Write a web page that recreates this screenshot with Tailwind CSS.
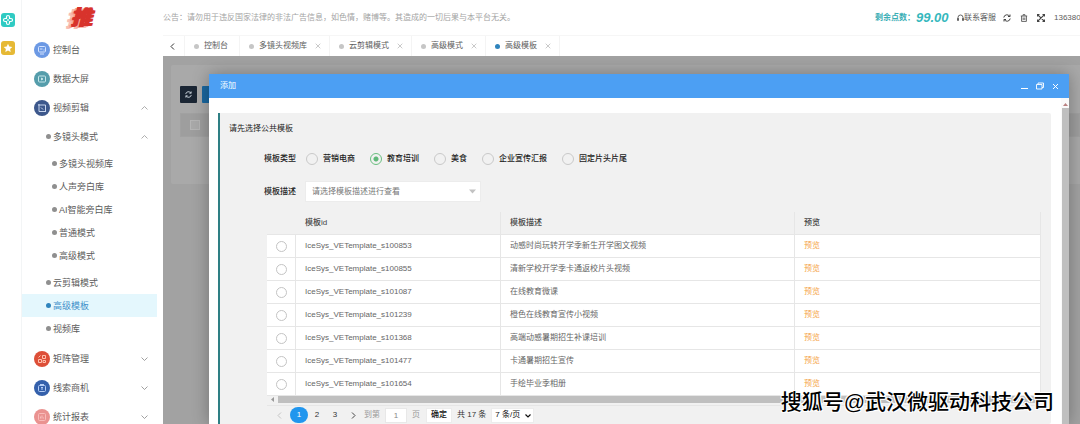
<!DOCTYPE html>
<html lang="zh-CN">
<head>
    <meta charset="UTF-8">
    <meta name="viewport" content="width=device-width, initial-scale=1.0">
    <title>高级模板</title>
    <script src="https://cdn.jsdelivr.net/npm/@tailwindcss/browser@4"></script>
</head>
<body class="flex h-screen overflow-hidden bg-white font-['Liberation_Sans','Noto_Sans_CJK_SC',sans-serif] text-[8px] leading-3 text-[#5c5c5c]">

    <!-- Shortcut strip -->
    <aside class="flex w-[22px] shrink-0 flex-col gap-[14px] border-r border-[#f3f5f6] pt-[13px] pl-px">
        <a href="#" aria-label="应用" class="block size-[14px] rounded-[3px] bg-[#2fcbc3]">
            <svg viewBox="0 0 14 14" fill="none" stroke="#fff" stroke-width="1.2" stroke-linejoin="round"><path d="M5.500 5.500V4a1.500 1.500 0 0 1 3 0v1.500H10a1.500 1.500 0 0 1 0 3H8.500V10a1.500 1.500 0 0 1-3 0V8.500H4a1.500 1.500 0 0 1 0-3zM7 6v2"/></svg>
        </a>
        <a href="#" aria-label="收藏" class="block size-[14px] rounded-[3px] bg-[#e6b935]">
            <svg viewBox="0 0 14 14" fill="#fff"><path d="m7 2.800 1.300 2.700 3 .4-2.200 2.100.6 3L7 9.600 4.300 11l.6-3-2.200-2.100 3-.4z"/></svg>
        </a>
    </aside>

    <!-- Sidebar -->
    <nav class="flex w-[141px] shrink-0 flex-col pr-[6px] text-[9px]">
        <div class="flex h-[35px] shrink-0 items-center justify-center pr-4">
            <span class="text-[21px] leading-none font-black text-[#d8332c] italic [text-shadow:1px_0_0_#d8332c,-1px_0_0_#d8332c,-3px_1px_0_#f7a598,-5px_2px_0_#f9bdb2,-6px_2px_0_#f9bdb2]">推</span>
        </div>

        <a href="#" class="flex h-[29px] shrink-0 items-center gap-[3px] pl-3">
            <svg class="size-4" viewBox="0 0 16 16" fill="none" stroke="#d5e4ff"><circle cx="8" cy="8" r="8" fill="#6c99e4" stroke="none"/><rect x="4.500" y="4.500" width="7" height="5.500" rx="1"/><path d="M6 7h2.500M6 12h4M10 7.500v1"/></svg>
            控制台
        </a>
        <a href="#" class="flex h-[29px] shrink-0 items-center gap-[3px] pl-3">
            <svg class="size-4" viewBox="0 0 16 16" fill="none" stroke="#c6e6ea"><circle cx="8" cy="8" r="8" fill="#559dab" stroke="none"/><rect x="4.500" y="5" width="7" height="6" rx="1"/><path d="M7.500 7v2L9 8z"/></svg>
            数据大屏
        </a>
        <a href="#" class="flex h-[29px] shrink-0 items-center gap-[3px] pl-3">
            <svg class="size-4" viewBox="0 0 16 16" fill="none" stroke="#c9d6ee"><circle cx="8" cy="8" r="8" fill="#3d588c" stroke="none"/><path d="M4 5h7.500v6.500M5 4v7.500h7M7 7.500l2 2"/></svg>
            视频剪辑
            <svg class="mr-[9px] ml-auto h-1 w-[7px]" viewBox="0 0 7 4" fill="none" stroke="#999" stroke-width=".8"><path d="m.5 3.500 3-3 3 3"/></svg>
        </a>
        <a href="#" class="flex h-[29px] shrink-0 items-center gap-[2px] pl-6">
            <i class="size-[5px] rounded-full bg-[#8f8f8f]"></i>多镜头模式
            <svg class="mr-[9px] ml-auto h-1 w-[7px]" viewBox="0 0 7 4" fill="none" stroke="#999" stroke-width=".8"><path d="m.5 3.500 3-3 3 3"/></svg>
        </a>

        <div class="flex shrink-0 flex-col pt-px pb-1 pl-[30px]">
            <a href="#" class="flex h-[23px] items-center gap-[2px]"><i class="size-[5px] rounded-full bg-[#8f8f8f]"></i>多镜头视频库</a>
            <a href="#" class="flex h-[23px] items-center gap-[2px]"><i class="size-[5px] rounded-full bg-[#8f8f8f]"></i>人声旁白库</a>
            <a href="#" class="flex h-[23px] items-center gap-[2px]"><i class="size-[5px] rounded-full bg-[#8f8f8f]"></i>AI智能旁白库</a>
            <a href="#" class="flex h-[23px] items-center gap-[2px]"><i class="size-[5px] rounded-full bg-[#8f8f8f]"></i>普通模式</a>
            <a href="#" class="flex h-[23px] items-center gap-[2px]"><i class="size-[5px] rounded-full bg-[#8f8f8f]"></i>高级模式</a>
        </div>

        <div class="flex shrink-0 flex-col pb-1">
            <a href="#" class="flex h-[23px] items-center gap-[2px] pl-6"><i class="size-[5px] rounded-full bg-[#8f8f8f]"></i>云剪辑模式</a>
            <a href="#" class="flex h-[23px] items-center gap-[2px] bg-[#e4f7fd] pl-6 text-[#3f8fc9]"><i class="size-[5px] rounded-full bg-[#2f84bd]"></i>高级模板</a>
            <a href="#" class="flex h-[23px] items-center gap-[2px] pl-6"><i class="size-[5px] rounded-full bg-[#8f8f8f]"></i>视频库</a>
        </div>

        <a href="#" class="flex h-[29px] shrink-0 items-center gap-[3px] pl-3">
            <svg class="size-4" viewBox="0 0 16 16" fill="none" stroke="#ffc0ac"><circle cx="8" cy="8" r="8" fill="#dd4f38" stroke="none"/><path d="M4.500 8.500h3v3h-3zM8.500 4.500h3v3h-3zM9 9.500h2.500v2H9zM4.500 6.500l2-2"/></svg>
            矩阵管理
            <svg class="mr-[9px] ml-auto h-1 w-[7px]" viewBox="0 0 7 4" fill="none" stroke="#888" stroke-width=".8"><path d="m.5.5 3 3 3-3"/></svg>
        </a>
        <a href="#" class="flex h-[29px] shrink-0 items-center gap-[3px] pl-3">
            <svg class="size-4" viewBox="0 0 16 16" fill="none" stroke="#b5cdf5"><circle cx="8" cy="8" r="8" fill="#3460ab" stroke="none"/><rect x="4.500" y="5.500" width="7" height="6" rx="1"/><path d="M6 4.500h4M7 7.500h2M8 7.500v2.500"/></svg>
            线索商机
            <svg class="mr-[9px] ml-auto h-1 w-[7px]" viewBox="0 0 7 4" fill="none" stroke="#888" stroke-width=".8"><path d="m.5.5 3 3 3-3"/></svg>
        </a>
        <a href="#" class="flex h-[29px] shrink-0 items-center gap-[3px] pl-3">
            <svg class="size-4" viewBox="0 0 16 16" fill="none" stroke="#f8bcba"><circle cx="8" cy="8" r="8" fill="#ea9290" stroke="none"/><rect x="4.500" y="4.500" width="7" height="7" rx="1"/><path d="M6.500 9.500v-2M8 9.500v-3M9.500 9.500v-1"/></svg>
            统计报表
            <svg class="mr-[9px] ml-auto h-1 w-[7px]" viewBox="0 0 7 4" fill="none" stroke="#888" stroke-width=".8"><path d="m.5.5 3 3 3-3"/></svg>
        </a>
    </nav>

    <div class="flex min-w-0 flex-1 flex-col">
        <!-- Top bar -->
        <header class="flex h-[35px] shrink-0 items-center justify-between whitespace-nowrap">
            <p class="text-[#a3a3a3]">公告：请勿用于违反国家法律的非法广告信息，如色情，赌博等。其造成的一切后果与本平台无关。</p>
            <div class="flex w-[205px] shrink-0 items-center">
                <span class="w-[41px] shrink-0 font-bold text-[#3aaeb5]">剩余点数：</span>
                <span class="w-[41px] shrink-0 text-[13px] leading-4 font-bold text-[#35b8bd] italic">99.00</span>
                <a href="#" class="flex w-[46px] shrink-0 items-center">
                    <svg class="h-2 w-[7px]" viewBox="0 0 7 8" fill="none" stroke="#555" stroke-width=".9"><path d="M1 5.500V3.500a2.500 2.500 0 0 1 5 0v2M.5 4.500h1v2h-1zM5.500 4.500h1v2h-1z"/></svg>联系客服
                </a>
                <button type="button" aria-label="刷新" class="mr-[9px] shrink-0">
                    <svg class="size-2" viewBox="0 0 8 8" fill="none" stroke="#444" stroke-width="1"><path d="M.8 3.500A3.200 3.200 0 0 1 6.800 2.500M7.200 4.500A3.200 3.200 0 0 1 1.200 5.500M7 .5v2H5M1 7.500v-2h2"/></svg>
                </button>
                <button type="button" aria-label="清除" class="mr-[9px] shrink-0">
                    <svg class="size-2" viewBox="0 0 8 8" fill="none" stroke="#555" stroke-width=".9"><path d="M.8 2h6.400M3 1.800V.7h2v1.100M1.600 2v5.400h4.800V2M3.200 3.500v2.500M4.800 3.500v2.500"/></svg>
                </button>
                <button type="button" aria-label="全屏" class="mr-[9px] shrink-0">
                    <svg class="size-2" viewBox="0 0 8 8" fill="none" stroke="#444" stroke-width="1.200"><path d="m.8.8 6.400 6.400M7.200.8.8 7.200M.5 2.500v-2h2M5.500.5h2v2M7.500 5.500v2h-2M2.500 7.500h-2v-2"/></svg>
                </button>
                <span>136380</span>
            </div>
        </header>

        <!-- Page tabs -->
        <div class="flex h-[21px] shrink-0 items-stretch border-t border-[#f6f6f6] whitespace-nowrap">
            <button type="button" aria-label="向左" class="flex w-[22px] items-center border-r border-[#f4f4f4] pl-[7px]">
                <svg class="h-[7px] w-[5px]" viewBox="0 0 5 7" fill="none" stroke="#333"><path d="m4 .5-3 3 3 3"/></svg>
            </button>
            <a href="#" class="flex items-center gap-[5px] border-r border-[#f4f4f4] pr-[11px] pl-[9px]"><i class="size-[5px] rounded-full bg-[#c6c6c6]"></i>控制台</a>
            <a href="#" class="flex items-center gap-[5px] border-r border-[#f4f4f4] pr-[8px] pl-[9px]"><i class="size-[5px] rounded-full bg-[#c6c6c6]"></i>多镜头视频库
                <svg class="ml-[3px] size-[6px]" viewBox="0 0 6 6" stroke="#bbb" stroke-width=".8"><path d="m.7.7 4.600 4.600M5.300.7.7 5.300"/></svg></a>
            <a href="#" class="flex items-center gap-[5px] border-r border-[#f4f4f4] pr-[8px] pl-[9px]"><i class="size-[5px] rounded-full bg-[#c6c6c6]"></i>云剪辑模式
                <svg class="ml-[3px] size-[6px]" viewBox="0 0 6 6" stroke="#bbb" stroke-width=".8"><path d="m.7.7 4.600 4.600M5.300.7.7 5.300"/></svg></a>
            <a href="#" class="flex items-center gap-[5px] border-r border-[#f4f4f4] pr-[8px] pl-[9px]"><i class="size-[5px] rounded-full bg-[#c6c6c6]"></i>高级模式
                <svg class="ml-[3px] size-[6px]" viewBox="0 0 6 6" stroke="#bbb" stroke-width=".8"><path d="m.7.7 4.600 4.600M5.300.7.7 5.300"/></svg></a>
            <a href="#" class="flex items-center gap-[5px] border-r border-[#f4f4f4] pr-[8px] pl-[9px]"><i class="size-[5px] rounded-full bg-[#2f84bd]"></i>高级模板
                <svg class="ml-[3px] size-[6px]" viewBox="0 0 6 6" stroke="#bbb" stroke-width=".8"><path d="m.7.7 4.600 4.600M5.300.7.7 5.300"/></svg></a>
        </div>

        <main class="relative flex-1 overflow-hidden bg-[#a2a2a2] pt-[9px] pl-2">
            <!-- Page behind the dialog -->
            <div class="h-[119px] rounded-l-[2px] bg-[#a9a9a9] pt-[21px] pl-[9px]">
                <div class="flex gap-[5px]">
                    <button type="button" aria-label="刷新列表" class="flex size-[17px] items-center justify-center rounded-[1px] bg-[#1b2634]">
                        <svg class="size-[7px]" viewBox="0 0 8 8" fill="none" stroke="#c5cdd5" stroke-width="1.100"><path d="M.8 3.500A3.200 3.200 0 0 1 6.800 2.500M7.200 4.500A3.200 3.200 0 0 1 1.200 5.500M7 .5v2H5M1 7.500v-2h2"/></svg>
                    </button>
                    <button type="button" aria-label="添加" class="h-[17px] w-10 rounded-[1px] bg-[#1a679f]"></button>
                </div>
                <div class="mt-[10px] flex h-6 items-center border border-[#a1a1a1] bg-[#9e9e9e] pl-[9px]">
                    <input type="checkbox" aria-label="全选" class="size-[10px] appearance-none border border-[#b5b5b5] bg-[#a9a9a9]">
                </div>
            </div>

            <!-- Dialog -->
            <section class="absolute top-[18px] right-[11px] bottom-0 left-[46px] flex flex-col bg-white shadow-[0_0_16px_rgba(0,0,0,0.3)]">
                <div class="flex h-6 shrink-0 items-center bg-[#4c9ff3] pr-[10px] pl-[11px] text-white">
                    <h2>添加</h2>
                    <div class="ml-auto flex items-center gap-2">
                        <button type="button" aria-label="最小化"><svg class="size-[7px]" viewBox="0 0 7 7" stroke="#fff"><path d="M0 5.500h7"/></svg></button>
                        <button type="button" aria-label="还原"><svg class="size-2" viewBox="0 0 8 8" fill="none" stroke="#fff" stroke-width=".9"><path d="M.5 2.500h5.500v4.500H.5zM2 2.500V1h5.500v4.500H6"/></svg></button>
                        <button type="button" aria-label="关闭"><svg class="size-[7px]" viewBox="0 0 7 7" stroke="#fff"><path d="m1 1 5 5M6 1 1 6"/></svg></button>
                    </div>
                </div>

                <div class="flex min-h-0 flex-1">
                    <div class="flex min-w-0 flex-1 flex-col pt-[15px] pr-[10px] pl-[9px]">
                        <form class="flex-1 rounded-r-[2px] border-l-2 border-[#2e7f84] bg-[#f1f1f1] pt-px pr-[10px] text-[#222]">
                            <h3 class="flex h-[30px] items-center pl-[9px]">请先选择公共模板</h3>

                            <div class="flex h-[30px] items-center gap-[9px] pl-[44px]">
                                <span class="w-8 font-medium">模板类型</span>
                                <div class="flex gap-[15px] pl-px font-medium">
                                    <label class="flex items-center gap-[5px]"><input type="radio" name="type" class="size-3 appearance-none rounded-full border border-[#c9c9c9]">营销电商</label>
                                    <label class="flex items-center gap-[5px]"><input type="radio" name="type" checked class="size-3 appearance-none rounded-full border border-[#c9c9c9] checked:border-[#6abf80] checked:bg-[radial-gradient(circle,#5fb878_0_2px,transparent_3px)]">教育培训</label>
                                    <label class="flex items-center gap-[5px]"><input type="radio" name="type" class="size-3 appearance-none rounded-full border border-[#c9c9c9]">美食</label>
                                    <label class="flex items-center gap-[5px]"><input type="radio" name="type" class="size-3 appearance-none rounded-full border border-[#c9c9c9]">企业宣传汇报</label>
                                    <label class="flex items-center gap-[5px]"><input type="radio" name="type" class="size-3 appearance-none rounded-full border border-[#c9c9c9]">固定片头片尾</label>
                                </div>
                            </div>

                            <div class="flex items-center gap-[9px] pt-[7px] pb-[9px] pl-[44px]">
                                <label for="desc" class="w-8 font-medium">模板描述</label>
                                <div class="relative">
                                    <select id="desc" class="block h-[21px] w-[176px] appearance-none border border-[#ececec] bg-white px-[6px] text-[#777]">
                                        <option>请选择模板描述进行查看</option>
                                    </select>
                                    <svg class="pointer-events-none absolute top-2 right-[5px] h-[5px] w-[7px]" viewBox="0 0 7 5" fill="#c2c2c2"><path d="M0 .5h7l-3.500 4z"/></svg>
                                </div>
                            </div>

                            <div class="ml-[47px] pt-px">
                                <table class="w-full table-fixed border-separate border-spacing-0 border-r border-[#e6e6e6] text-left text-[#666]">
                                    <thead>
                                        <tr class="h-[23px] text-[#444]">
                                            <th class="w-[29px] border-b border-[#e6e6e6]"></th>
                                            <th class="w-[205px] border-r border-b border-[#e6e6e6] pl-[9px] font-medium">模板id</th>
                                            <th class="w-[294px] border-r border-b border-[#e6e6e6] pl-[9px] font-medium">模板描述</th>
                                            <th class="border-b border-[#e6e6e6] pl-[9px] font-medium">预览</th>
                                        </tr>
                                    </thead>
                                    <tbody id="rows" class="bg-white"></tbody>
                                </table>
                                <div class="flex h-[7px] items-center gap-1 pl-1">
                                    <svg class="h-[5px] w-[3px]" viewBox="0 0 3 5" fill="#999"><path d="M3 0v5L0 2.500z"/></svg>
                                    <div class="mr-1 h-[7px] flex-1 bg-[#bfbfbf]"></div>
                                </div>

                                <!-- Pager -->
                                <div class="mt-[2px] flex items-center border-t border-[#e6e6e6] pt-px pl-[10px] text-[#333]">
                                    <button type="button" aria-label="上一页" class="mr-[8px]"><svg class="h-[7px] w-[5px]" viewBox="0 0 5 7" fill="none" stroke="#c4c4c4"><path d="m4 .5-3 3 3 3"/></svg></button>
                                    <button type="button" class="h-4 w-[18px] rounded-full bg-[#2196ee] text-white">1</button>
                                    <button type="button" class="w-[18px]">2</button>
                                    <button type="button" class="w-[18px]">3</button>
                                    <button type="button" aria-label="下一页" class="mr-[8px] ml-[7px]"><svg class="h-[7px] w-[5px]" viewBox="0 0 5 7" fill="none" stroke="#444"><path d="m1 .5 3 3-3 3"/></svg></button>
                                    <label for="page" class="text-[#999]">到第</label>
                                    <input id="page" type="text" value="1" class="mx-[5px] h-[15px] w-[22px] border border-[#e8e8e8] bg-white text-center text-[#888]">
                                    <span class="text-[#999]">页</span>
                                    <button type="button" class="mr-[5px] ml-[6px] h-[15px] w-[26px] border border-[#ececec] bg-white font-medium text-[#111]">确定</button>
                                    <span class="mr-[5px]">共 17 条</span>
                                    <div class="relative">
                                        <select aria-label="每页条数" class="block h-[15px] w-[43px] appearance-none border border-[#ececec] bg-white pl-[3px] text-[#111]">
                                            <option>7 条/页</option>
                                        </select>
                                        <svg class="pointer-events-none absolute top-[6px] right-[3px] h-1 w-[6px]" viewBox="0 0 6 4" fill="none" stroke="#111" stroke-width="1.200"><path d="m.5.5 2.500 2.500L5.500.5"/></svg>
                                    </div>
                                </div>
                            </div>
                        </form>
                    </div>

                    <!-- Dialog scrollbar -->
                    <div class="flex w-2 flex-col items-center bg-[#fafafa] pt-[5px]">
                        <svg class="h-[3px] w-[5px]" viewBox="0 0 5 3" fill="#b98080"><path d="M0 3h5L2.500 0z"/></svg>
                        <div class="mt-[2px] w-[7px] flex-1 bg-[#bfbfbf]"></div>
                    </div>
                </div>
            </section>

            <p class="absolute right-[26px] bottom-[8px] text-[21px] leading-7 font-medium whitespace-nowrap text-black [text-shadow:1px_1px_0_#fff,-1px_-1px_0_#fff,1px_-1px_0_#fff,-1px_1px_0_#fff]">搜狐号@武汉微驱动科技公司</p>
        </main>
    </div>

    <script>
        const templates = [
            ['IceSys_VETemplate_s100853', '动感时尚玩转开学季新生开学图文视频'],
            ['IceSys_VETemplate_s100855', '清新学校开学季卡通返校片头视频'],
            ['IceSys_VETemplate_s101087', '在线教育微课'],
            ['IceSys_VETemplate_s101239', '橙色在线教育宣传小视频'],
            ['IceSys_VETemplate_s101368', '高端动感暑期招生补课培训'],
            ['IceSys_VETemplate_s101477', '卡通暑期招生宣传'],
            ['IceSys_VETemplate_s101654', '手绘毕业季相册'],
        ];

        document.getElementById('rows').innerHTML = templates.map(([id, desc]) => `
            <tr class="h-[23px]">
                <td class="border-r border-b border-[#e6e6e6] pl-[9px]"><input type="radio" name="template" aria-label="${id}" class="block size-[11px] appearance-none rounded-full border border-[#c4c4c4]"></td>
                <td class="border-r border-b border-[#e6e6e6] pl-[9px]">${id}</td>
                <td class="border-r border-b border-[#e6e6e6] pl-[9px]">${desc}</td>
                <td class="border-b border-[#e6e6e6] pl-[9px]"><a href="#" class="text-[#f5a54a]">预览</a></td>
            </tr>
        `).join('');
    </script>
</body>
</html>
